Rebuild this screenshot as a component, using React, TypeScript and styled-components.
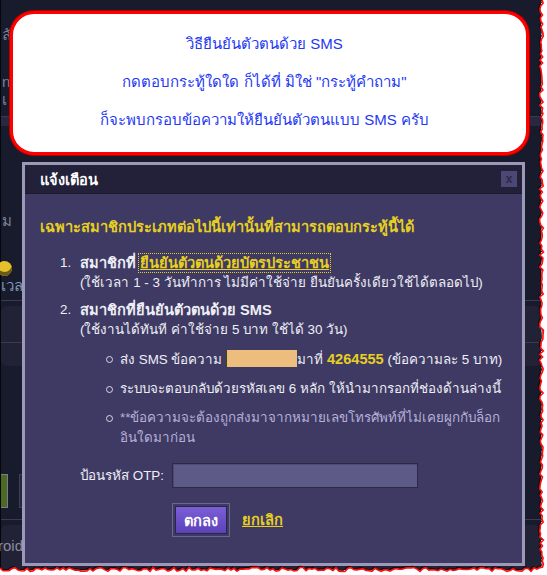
import { FC } from "react";

import styled, { createGlobalStyle } from "styled-components";

const GlobalStyle = createGlobalStyle`
  html, body {
    margin: 0;
    padding: 0;
    background: #ffffff;
  }

  body {
    font-family: "Liberation Sans", "DejaVu Sans", "Noto Sans", sans-serif;
    font-size: 14px;
  }
`;

// torn edge of the screenshot, right and bottom
const tornEdge = (() => {
  let seed = 11;
  const rnd = () => {
    seed = (seed * 9301 + 49297) % 233280;
    return seed / 233280;
  };

  const pts: string[] = [];
  for (let y = 0; y <= 568; y += 3) {
    pts.push(`${(539.5 + rnd() * 4).toFixed(1)},${y}`);
  }
  for (let x = 540; x >= 0; x -= 3) {
    pts.push(`${x},${(567.5 + rnd() * 4).toFixed(1)}`);
  }
  return pts;
})();

const BackText = [
  { top: 26, text: "ลั" },
  { top: 73, text: "ng" },
  { top: 91, text: "เ" },
];

const App: FC = () => {
  return (
    <>
      <GlobalStyle />
      <Shot>
        <BackPage>
          <TopArea>
            {BackText.map((item) => (
              <FadeText key={item.top} style={{ top: item.top }}>
                {item.text}
              </FadeText>
            ))}
          </TopArea>
          <Band />
          <MidArea>
            <FadeText style={{ top: 86 }}>ม</FadeText>
            <Smiley />
            <LevelText>เวล</LevelText>
          </MidArea>
          <Divider />
          <Panel>
            <PanelLine />
          </Panel>
          <GapArea>
            <GreenBtn />
            <GhostBtn />
          </GapArea>
          <Divider />
          <Panel $tall>
            <RoidText>roid</RoidText>
          </Panel>
        </BackPage>

        <Callout>
          <CalloutLine>วิธียืนยันตัวตนด้วย SMS</CalloutLine>
          <CalloutLine>กดตอบกระทู้ใดใด ก็ได้ที่ มิใช่ "กระทู้คำถาม"</CalloutLine>
          <CalloutLine>ก็จะพบกรอบข้อความให้ยืนยันตัวตนแบบ SMS ครับ</CalloutLine>
        </Callout>

        <Dialog>
          <TitleBar>
            <Title>แจ้งเตือน</Title>
            <CloseButton>x</CloseButton>
          </TitleBar>

          <Body>
            <Heading>
              เฉพาะสมาชิกประเภทต่อไปนี้เท่านั้นที่สามารถตอบกระทู้นี้ได้
            </Heading>

            <List>
              <Item>
                <Num>1.</Num>
                <ItemBody>
                  <Strong>
                    สมาชิกที่ <Link $focus>ยืนยันตัวตนด้วยบัตรประชาชน</Link>
                  </Strong>
                  <Sub>
                    (ใช้เวลา 1 - 3 วันทำการ ไม่มีค่าใช้จ่าย
                    ยืนยันครั้งเดียวใช้ได้ตลอดไป)
                  </Sub>
                </ItemBody>
              </Item>

              <Item>
                <Num>2.</Num>
                <ItemBody>
                  <Strong>สมาชิกที่ยืนยันตัวตนด้วย SMS</Strong>
                  <Sub>(ใช้งานได้ทันที ค่าใช้จ่าย 5 บาท ใช้ได้ 30 วัน)</Sub>

                  <Bullets>
                    <Bullet $nowrap>
                      ส่ง SMS ข้อความ <Redact />
                      มาที่ <Number>4264555</Number> (ข้อความละ 5 บาท)
                    </Bullet>
                    <Bullet $nowrap>
                      ระบบจะตอบกลับด้วยรหัสเลข 6 หลัก ให้นำมากรอกที่ช่องด้านล่างนี้
                    </Bullet>
                    <Bullet $muted>
                      **ข้อความจะต้องถูกส่งมาจากหมายเลขโทรศัพท์ที่ไม่เคยผูกกับล็อก
                      <br />
                      อินใดมาก่อน
                    </Bullet>
                  </Bullets>
                </ItemBody>
              </Item>
            </List>

            <OtpRow>
              <OtpLabel>ป้อนรหัส OTP:</OtpLabel>
              <OtpInput type="text" />
            </OtpRow>

            <Actions>
              <OkFrame>
                <OkButton>ตกลง</OkButton>
              </OkFrame>
              <Link>ยกเลิก</Link>
            </Actions>
          </Body>
        </Dialog>

        <Torn viewBox="0 0 547 575" width={547} height={575}>
          <path
            d={`M547,0 L${tornEdge.join(" L")} L0,575 L547,575 Z`}
            fill="#ffffff"
          />
          <polyline
            points={tornEdge.join(" ")}
            fill="none"
            stroke="#1a0000"
            strokeWidth={1}
            transform="translate(-1.2,-1.2)"
          />
          <polyline
            points={tornEdge.join(" ")}
            fill="none"
            stroke="#ff1010"
            strokeWidth={1.6}
          />
        </Torn>
      </Shot>
    </>
  );
};

const Shot = styled.div`
  position: relative;
  width: 547px;
  height: 575px;
  overflow: hidden;
`;

const BackPage = styled.div`
  width: 541px;
  height: 570px;
  display: flex;
  flex-direction: column;

  background: #181b2c;
  border-left: 1px solid #05060c;
  box-sizing: border-box;
`;

const TopArea = styled.div`
  position: relative;
  height: 117px;
`;

const FadeText = styled.span`
  position: absolute;
  left: 1px;

  color: #7d8094;
  font-size: 15px;
  line-height: 18px;
`;

const Band = styled.div`
  height: 9px;
  background: #2a2840;
  border-top: 1px solid #3a3852;
`;

const MidArea = styled.div`
  position: relative;
  height: 175px;
`;

const Smiley = styled.div`
  position: absolute;
  left: -4px;
  top: 135px;

  width: 15px;
  height: 15px;
  border-radius: 50%;
  background: #e6c12a;
  box-shadow: inset 0 -4px 0 #6a5a1a;
`;

const LevelText = styled.span`
  position: absolute;
  left: 0;
  top: 148px;

  color: #7f97b8;
  font-size: 15px;
`;

const Divider = styled.div`
  height: 1px;
  background: #3b3a52;
`;

const Panel = styled.div<{ $tall?: boolean }>`
  position: relative;
  height: ${(props) => (props.$tall ? "45px" : "60px")};
  margin: 5px 0 0;

  background: #222236;
  border-radius: 6px;
`;

const PanelLine = styled.div`
  position: absolute;
  left: 0;
  right: 0;
  top: 36px;

  height: 1px;
  background: #3b3a52;
`;

const GapArea = styled.div`
  display: flex;
  align-items: flex-start;
  gap: 11px;
  height: 154px;
  padding-top: 108px;
  box-sizing: border-box;
`;

const GreenBtn = styled.div`
  width: 6px;
  height: 32px;

  background: #4c6a22;
  border: 1px solid #7a7a90;
  border-left: none;
`;

const GhostBtn = styled.div`
  width: 4px;
  height: 32px;

  background: #262638;
  border: 1px solid #3e3e55;
`;

const RoidText = styled.span`
  position: absolute;
  left: -3px;
  top: 12px;

  color: #8a8c9c;
  font-size: 15px;
  line-height: 18px;
`;

const Callout = styled.div`
  position: absolute;
  left: 10px;
  top: 11px;

  width: 519px;
  height: 144px;
  box-sizing: border-box;
  padding-top: 19px;
  display: flex;
  flex-direction: column;
  align-items: center;
  gap: 16px;

  background: #ffffff;
  border: 3px solid #ff0000;
  border-radius: 24px;
  box-shadow: 0 0 0 1px #b00000;
`;

const CalloutLine = styled.div`
  color: #2438f4;
  font-size: 15px;
  line-height: 22px;
  padding-right: 10px;
`;

const Dialog = styled.div`
  position: absolute;
  left: 22px;
  top: 162px;

  width: 503px;
  height: 404px;
  box-sizing: border-box;
  display: flex;
  flex-direction: column;

  background: #3e3a63;
  border: 3px solid #9b99b7;
`;

const TitleBar = styled.div`
  height: 28px;
  flex-shrink: 0;
  padding: 0 5px 0 15px;
  display: flex;
  align-items: center;
  justify-content: space-between;

  background: #23213a;
  border-bottom: 1px solid #1a1930;
`;

const Title = styled.span`
  color: #ffffff;
  font-weight: 700;
  font-size: 14.6px;
`;

const CloseButton = styled.span`
  width: 16px;
  height: 16px;
  display: flex;
  align-items: center;
  justify-content: center;

  background: #4b4873;
  color: #2c2a48;
  font-size: 12px;
  font-weight: 700;
  line-height: 1;
`;

const Body = styled.div`
  padding: 23px 15px 0;
  display: flex;
  flex-direction: column;
  color: #eeeef6;
  font-size: 13.4px;
  line-height: 20px;
`;

const Heading = styled.div`
  color: #e6cf22;
  font-size: 14.6px;
  font-weight: 700;
`;

const List = styled.div`
  margin-top: 16px;
  padding-left: 20px;
  display: flex;
  flex-direction: column;
  gap: 7px;
`;

const Item = styled.div`
  display: flex;
`;

const Num = styled.span`
  width: 20px;
  flex-shrink: 0;
`;

const ItemBody = styled.div`
  display: flex;
  flex-direction: column;
`;

const Strong = styled.span`
  font-size: 14.6px;
  font-weight: 700;
`;

const Sub = styled.span``;

const Link = styled.span<{ $focus?: boolean }>`
  color: #e6cf22;
  font-size: 14.6px;
  font-weight: 700;
  text-decoration: underline;
  cursor: pointer;
  ${(props) => props.$focus && "outline: 1px dotted #e6cf22; outline-offset: 1px;"}
`;

const Bullets = styled.ul`
  margin: 9px 0 0;
  padding: 0 0 0 40px;
  display: flex;
  flex-direction: column;
  gap: 9px;
  list-style: none;
`;

const Bullet = styled.li<{ $muted?: boolean; $nowrap?: boolean }>`
  position: relative;
  color: ${(props) => (props.$muted ? "#b6b0d9" : "#eeeef6")};
  white-space: ${(props) => (props.$nowrap ? "nowrap" : "normal")};

  &::before {
    content: "";
    position: absolute;
    left: -14px;
    top: 7px;
    width: 5px;
    height: 5px;
    border: 1px solid #d8d6ea;
    border-radius: 50%;
  }
`;

const Redact = styled.span`
  display: inline-block;
  width: 69px;
  height: 17px;
  margin-left: 1px;
  vertical-align: -3px;

  background: #ecbd7d;
  border-left: 1px solid #e6cf22;
`;

const Number = styled.span`
  color: #e6cf22;
  font-size: 14.6px;
  font-weight: 700;
`;

const OtpRow = styled.div`
  margin-top: 15px;
  padding-left: 40px;
  display: flex;
  align-items: center;
`;

const OtpLabel = styled.span`
  width: 92px;
  flex-shrink: 0;
`;

const OtpInput = styled.input`
  width: 246px;
  height: 25px;
  box-sizing: border-box;
  padding: 0 4px;

  background: #5e5a88;
  border: 1px solid #2b2946;
  box-shadow: inset 1px 1px 0 #4e4a78;
  outline: none;
  color: #ffffff;
`;

const Actions = styled.div`
  margin-top: 15px;
  padding-left: 132px;
  display: flex;
  align-items: center;
  gap: 12px;
`;

const OkFrame = styled.div`
  padding: 2px;
  border: 1px solid #6b6793;
`;

const OkButton = styled.button`
  width: 52px;
  height: 28px;
  padding: 0;

  background: linear-gradient(#7a5fd6, #5c42b8);
  border: 1px solid #2a2648;
  color: #ffffff;
  font-family: inherit;
  font-size: 14.6px;
  font-weight: 700;
  cursor: pointer;
`;

const Torn = styled.svg`
  position: absolute;
  left: 0;
  top: 0;
  pointer-events: none;
`;

export default App;
